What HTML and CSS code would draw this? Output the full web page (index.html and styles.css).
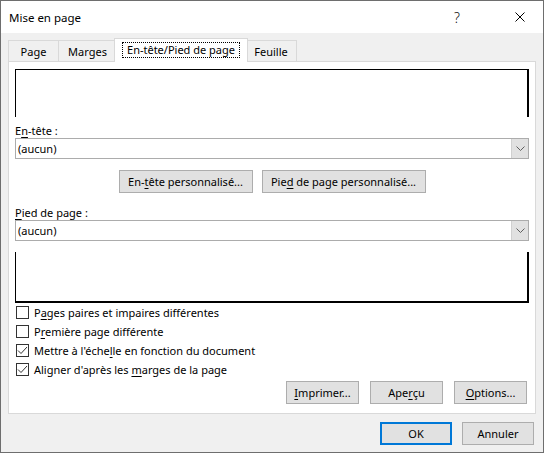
FILE: index.html
```html
<!DOCTYPE html>
<html lang="fr">
<head>
<meta charset="utf-8">
<title>Mise en page</title>
<link rel="stylesheet" href="styles.css">
</head>
<body>
<div class="window">
  <div class="titlebar">
    <span class="title">Mise en page</span>
    <span class="help">?</span>
    <span class="close"><svg width="10" height="10" viewBox="0 0 10 10"><path d="M0.5 0.5L9.5 9.5M9.5 0.5L0.5 9.5" stroke="#000" stroke-width="1" fill="none"/></svg></span>
  </div>
  <div class="body">
    <div class="tabs">
      <div class="tab tab-page">Page</div>
      <div class="tab tab-marges">Marges</div>
      <div class="tab tab-active"><span class="focus">En-tête/Pied de page</span></div>
      <div class="tab tab-feuille">Feuille</div>
    </div>
    <div class="panel">
      <div class="preview preview-head"></div>
      <div class="label label-head">E<u>n</u>-tête :</div>
      <div class="select">
        <span class="select-value">(aucun)</span>
        <span class="select-arrow"><svg width="9" height="5" viewBox="0 0 9 5"><path d="M0.5 0.5L4.5 4.5L8.5 0.5" stroke="#5f5f5f" stroke-width="1" fill="none"/></svg></span>
      </div>
      <div class="custom-row">
        <button class="btn btn-head">En-<u>t</u>ête personnalisé...</button>
        <button class="btn btn-foot">Pie<u>d</u> de page personnalisé...</button>
      </div>
      <div class="label label-foot"><u>P</u>ied de page :</div>
      <div class="select">
        <span class="select-value">(aucun)</span>
        <span class="select-arrow"><svg width="9" height="5" viewBox="0 0 9 5"><path d="M0.5 0.5L4.5 4.5L8.5 0.5" stroke="#5f5f5f" stroke-width="1" fill="none"/></svg></span>
      </div>
      <div class="preview preview-foot"></div>
      <div class="checks">
        <div class="check"><span class="box"></span><span>P<u>a</u>ges paires et impaires différentes</span></div>
        <div class="check"><span class="box"></span><span>P<u>r</u>emière page différente</span></div>
        <div class="check"><span class="box"><svg width="11" height="11" viewBox="0 0 11 11"><path d="M1 5.5L4 8.5L10 2" stroke="#333" stroke-width="1" fill="none"/></svg></span><span>Mettre à l'éche<u>l</u>le en fonction du document</span></div>
        <div class="check"><span class="box"><svg width="11" height="11" viewBox="0 0 11 11"><path d="M1 5.5L4 8.5L10 2" stroke="#333" stroke-width="1" fill="none"/></svg></span><span>Aligner d'après les <u>m</u>arges de la page</span></div>
      </div>
      <div class="actions">
        <button class="btn btn-action"><u>I</u>mprimer...</button>
        <button class="btn btn-action">Ape<u>r</u>çu</button>
        <button class="btn btn-action"><u>O</u>ptions...</button>
      </div>
    </div>
    <div class="footer">
      <button class="btn btn-dialog btn-default">OK</button>
      <button class="btn btn-dialog">Annuler</button>
    </div>
  </div>
</div>
</body>
</html>
```

FILE: styles.css
```css
* { box-sizing: border-box; }
html, body { margin: 0; padding: 0; }
body {
  font-family: "Noto Sans", "Segoe UI", sans-serif;
  font-size: 11px;
  color: #000;
  background: #fff;
}
u { text-decoration: underline; text-underline-offset: 2px; }

.window {
  width: 544px;
  height: 453px;
  border: 1px solid #6e6e6e;
  display: flex;
  flex-direction: column;
  background: #f0f0f0;
}

.titlebar {
  height: 32px;
  background: #fff;
  display: flex;
  align-items: center;
  padding-left: 8px;
}
.title { flex: 1; font-size: 11.5px; }
.help { width: 16px; text-align: center; font-size: 14px; font-weight: 300; margin-right: 32px; color: #111; }
.close { width: 46px; height: 32px; display: flex; align-items: center; justify-content: center; }

.body {
  flex: 1;
  display: flex;
  flex-direction: column;
  padding: 5px 7px 7px 7px;
}

.tabs {
  display: flex;
  align-items: flex-start;
  height: 23px;
}
.tab {
  height: 21px;
  margin-top: 2px;
  border: 1px solid #d9d9d9;
  border-bottom: none;
  background: #f0f0f0;
  display: flex;
  align-items: center;
  justify-content: center;
  line-height: 15px;
}
.tab-page { width: 51px; }
.tab-marges { width: 59px; margin-left: -1px; }
.tab-active {
  width: 134px;
  height: 24px;
  margin-top: 0;
  margin-left: -3px;
  margin-bottom: -1px;
  background: #fff;
  position: relative;
  z-index: 1;
  padding-bottom: 1px;
}
.tab-feuille { width: 52px; margin-left: -3px; }
.focus {
  border: 1px dotted #000;
  padding: 0 4px;
  line-height: 14px;
}

.panel {
  height: 353px;
  border: 1px solid #d9d9d9;
  background: #fff;
  padding: 7px 6px 9px 6px;
  display: flex;
  flex-direction: column;
}

.preview { border-left: 1px solid #000; border-right: 2px solid #000; }
.preview-head { height: 48px; border-top: 1px solid #000; }
.preview-foot { height: 51px; border-bottom: 2px solid #000; margin-top: 11px; }

.label { line-height: 15px; }
.label-head { height: 21px; padding-top: 6px; }
.label-foot { height: 27px; padding-top: 12px; }

.select {
  height: 21px;
  border: 1px solid #acacac;
  display: flex;
  align-items: center;
  background: #fff;
}
.select-value { flex: 1; padding-left: 2px; line-height: 15px; }
.select-arrow {
  width: 17px;
  height: 19px;
  background: #e1e1e1;
  border-left: 1px solid #d0d0d0;
  display: flex;
  align-items: center;
  justify-content: center;
}

.btn {
  font-family: inherit;
  font-size: 11px;
  color: #000;
  height: 23px;
  padding: 0;
  background: #e1e1e1;
  border: 1px solid #adadad;
  border-radius: 0;
  line-height: 15px;
}

.custom-row {
  display: flex;
  justify-content: center;
  gap: 9px;
  margin-top: 11px;
}
.btn-head { width: 134px; }
.btn-foot { width: 164px; }

.checks { display: flex; flex-direction: column; }
.check {
  height: 19px;
  display: flex;
  align-items: center;
  gap: 5px;
  line-height: 15px;
}
.box {
  width: 13px;
  height: 13px;
  margin-left: 1px;
  border: 1px solid #333;
  background: #fff;
  display: flex;
  align-items: center;
  justify-content: center;
}

.actions {
  display: flex;
  justify-content: flex-end;
  gap: 11px;
  margin-top: 2px;
  padding-right: 2px;
}
.btn-action { width: 73px; }

.footer {
  display: flex;
  justify-content: flex-end;
  gap: 10px;
  margin-top: 8px;
  padding-right: 2px;
}
.btn-dialog { width: 72px; }
.btn-default { border-color: #0078d7; box-shadow: inset 0 0 0 1px #0078d7; }
```
